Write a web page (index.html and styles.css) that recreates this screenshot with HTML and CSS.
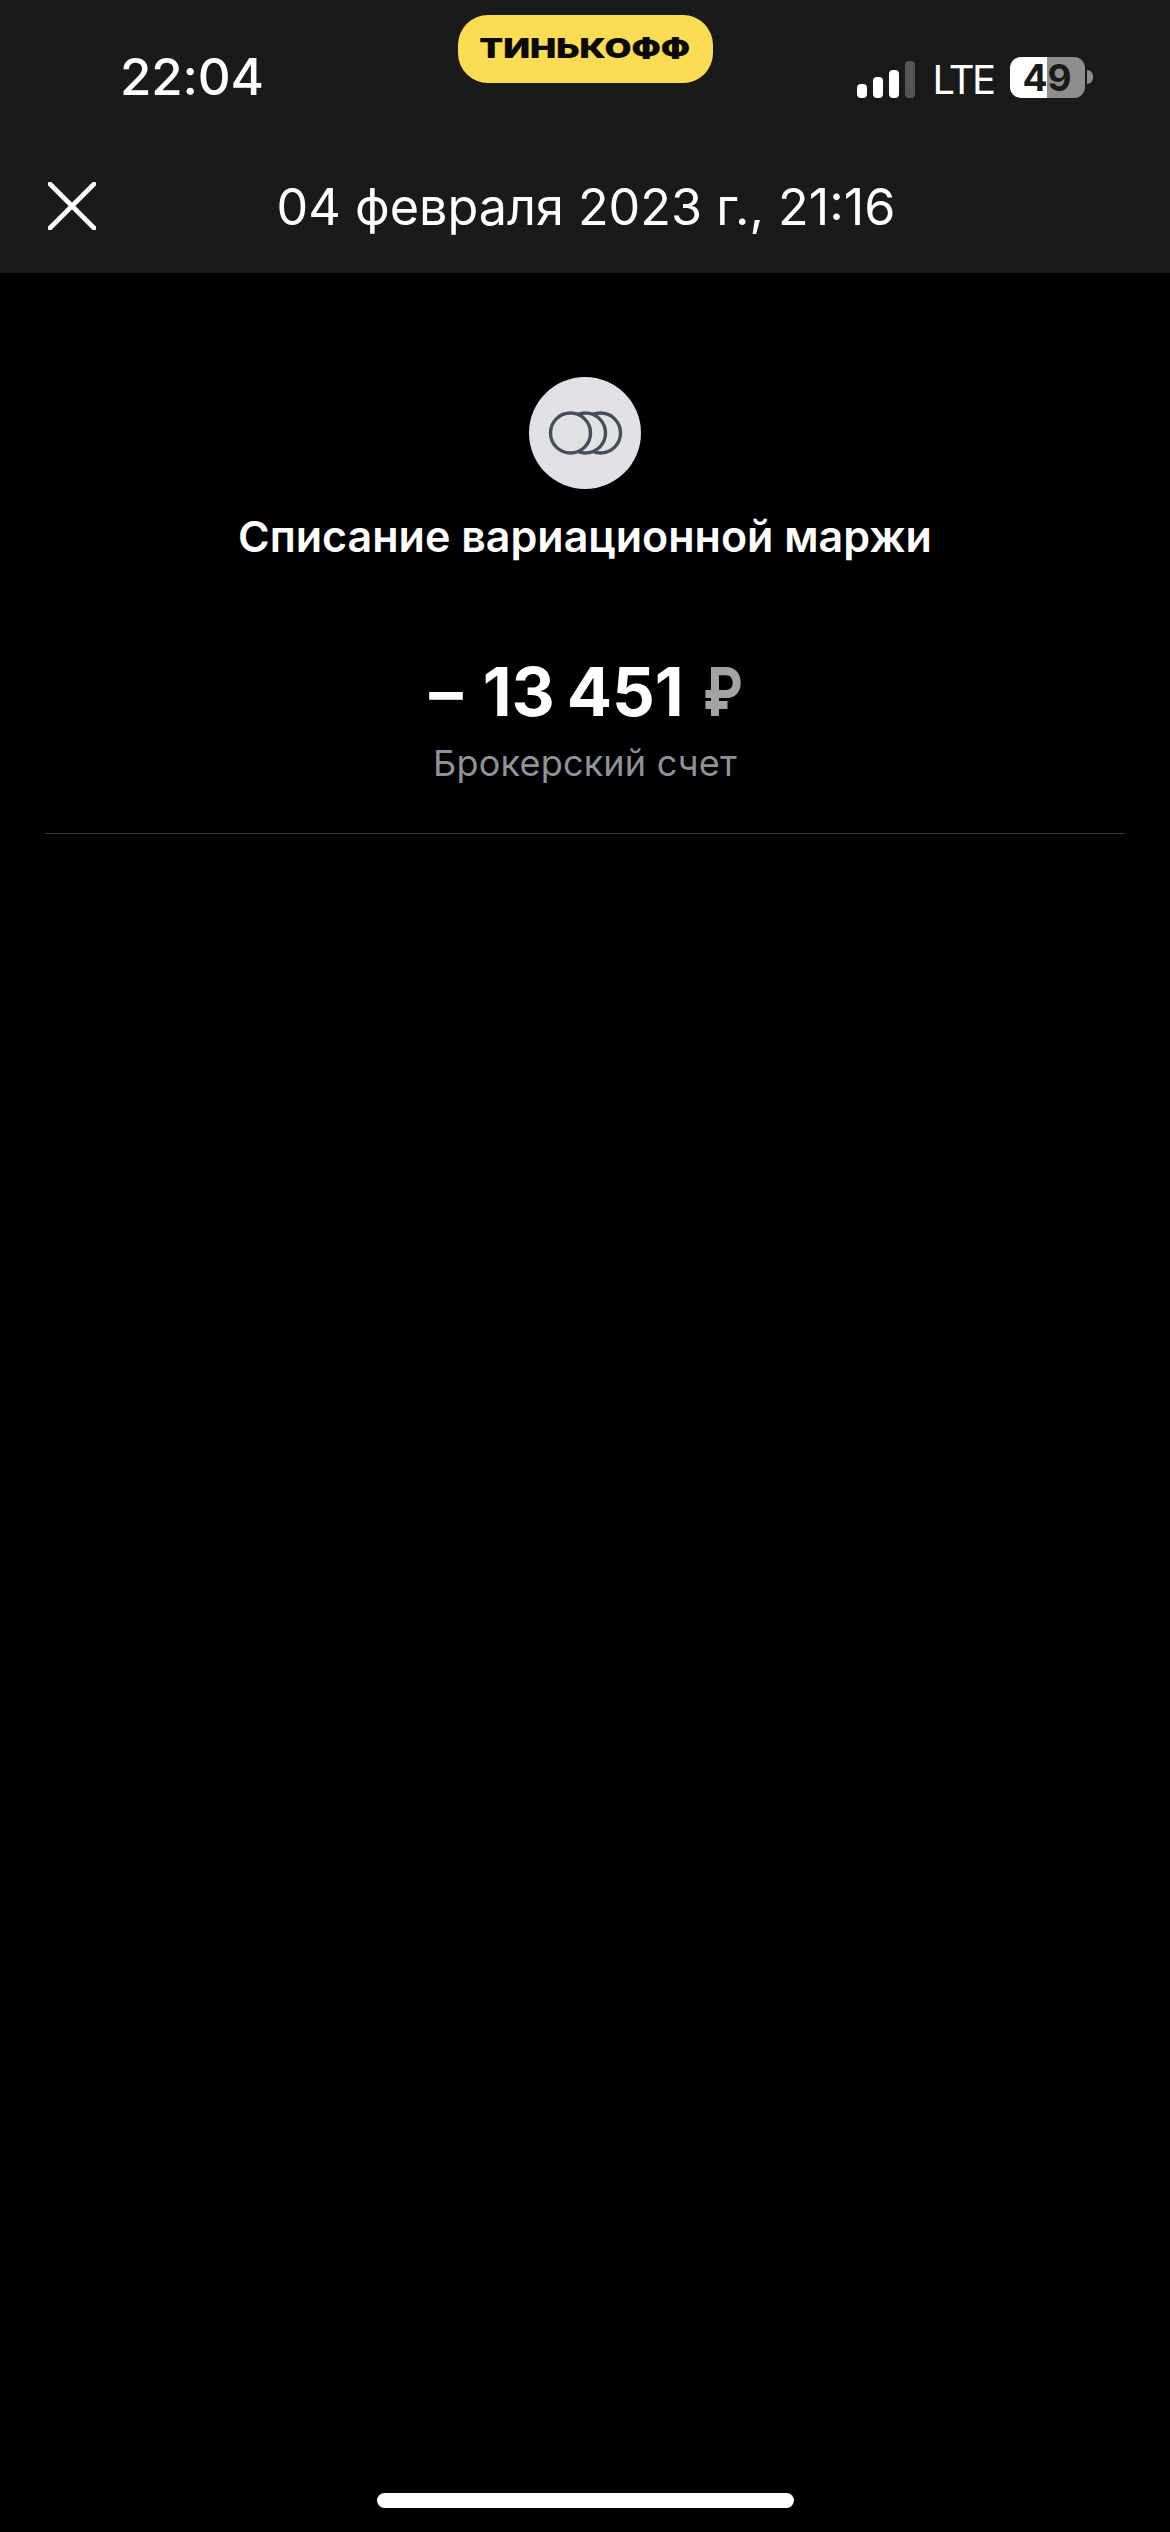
FILE: index.html
```html
<!DOCTYPE html>
<html lang="ru">
<head>
<meta charset="utf-8">
<title>Операция</title>
<link rel="stylesheet" href="styles.css">
</head>
<body>
<div class="page">
  <header class="header">
    <div class="status">
      <div class="time">22:04</div>
      <div class="pill"><span class="pill-text">ТИНЬКОФФ</span></div>
      <div class="indicators">
        <div class="signal">
          <i class="bar b1"></i><i class="bar b2"></i><i class="bar b3"></i><i class="bar b4"></i>
        </div>
        <span class="lte">LTE</span>
        <div class="battery"><span class="level">49</span></div>
        <i class="tip"></i>
      </div>
    </div>
    <div class="nav">
      <svg class="close" width="48" height="48" viewBox="0 0 48 48" fill="none"><path d="M2 2 46 46M46 2 2 46" stroke="#fff" stroke-width="4.6" stroke-linecap="round"/></svg>
      <div class="nav-title">04 февраля 2023 г., 21:16</div>
    </div>
  </header>
  <main class="main">
    <div class="avatar">
      <svg width="78" height="48" viewBox="0 0 78 48" fill="none">
        <g fill="#dfe1e4" stroke="#484c58" stroke-width="3.4">
          <circle cx="54.5" cy="24" r="20"/>
          <circle cx="39.5" cy="24" r="20"/>
          <circle cx="24.5" cy="24" r="20"/>
        </g>
      </svg>
    </div>
    <h1 class="op-title">Списание вариационной маржи</h1>
    <div class="amount"><span class="dash">–</span><span>13 451</span><span class="currency">₽</span></div>
    <div class="account">Брокерский счет</div>
    <div class="divider"></div>
  </main>
  <div class="home"></div>
</div>
</body>
</html>
```
FILE: styles.css
```css
* { box-sizing: border-box; }
html, body { margin: 0; padding: 0; background: #000; }
body { font-family: Inter, "Noto Sans", sans-serif; color: #fff; }
.page { height: 2532px; display: flex; flex-direction: column; overflow: hidden; }
.header { height: 273px; background: #1a1a1a; flex: none; }
.status { height: 108px; display: grid; grid-template-columns: 1fr 255px 1fr; padding-top: 15px; }
.time { padding: 32px 0 0 120px; font-size: 51px; line-height: 60px; font-weight: 500; letter-spacing: -0.2px; }
.pill { height: 68px; border-radius: 30px; background: #fcdb55; display: flex; align-items: center; justify-content: center; }
.pill-text { display: inline-block; color: #0a0a0a; font-size: 27px; font-weight: 900; line-height: 30px; white-space: nowrap; transform: scaleX(1.29); }
.indicators { display: flex; align-items: flex-start; padding: 42px 0 0 144px; position: relative; }
.signal { display: flex; align-items: flex-end; gap: 6px; height: 39px; margin-top: 2px; }
.bar { display: block; width: 10px; background: #fff; border-radius: 4px; }
.b1 { height: 14px; }
.b2 { height: 21px; }
.b3 { height: 28px; }
.b4 { height: 37px; background: #555; }
.lte { margin: 3px 0 0 18px; font-size: 40px; line-height: 40px; font-weight: 400; width: 60px; white-space: nowrap; letter-spacing: -2.6px; }
.battery { margin-left: 17px; width: 75px; height: 41px; border-radius: 11px; background: linear-gradient(to right, #fff 0, #fff 37px, #8e8e8e 37px); display: flex; align-items: center; justify-content: center; }
.level { color: #1a1a1a; font-size: 37px; line-height: 41px; font-weight: 700; }
.tip { width: 6px; height: 14px; margin: 13px 0 0 2px; background: #8e8e8e; border-radius: 0 7px 7px 0; display: block; }
.nav { height: 165px; display: flex; align-items: flex-start; position: relative; padding: 74px 0 0 48px; }
.close { display: block; flex: none; }
.nav-title { position: absolute; left: 0; right: 0; top: 69px; text-align: center; font-size: 50.3px; line-height: 60px; font-weight: 400; padding-left: 2px; }
.main { display: flex; flex-direction: column; align-items: center; padding-top: 104px; }
.avatar { width: 112px; height: 112px; border-radius: 50%; background: #dfe1e4; display: flex; align-items: center; justify-content: center; }
.op-title { margin: 22px 0 0; font-size: 43px; line-height: 50px; font-weight: 600; white-space: nowrap; }
.amount { margin-top: 92px; display: flex; align-items: baseline; font-size: 67px; line-height: 78px; font-weight: 700; white-space: nowrap; word-spacing: -4px; }
.dash { margin-right: 20px; }
.currency { color: #a3a3a3; margin-left: 19px; display: inline-block; width: 38px; transform: scaleX(0.8); transform-origin: left center; }
.account { margin-top: 10px; font-size: 36px; line-height: 44px; color: #8e9299; letter-spacing: 0.2px; }
.divider { margin-top: 48px; width: 1080px; height: 1px; background: #3a3a3a; flex: none; }
.home { margin: auto auto 24px; width: 417px; height: 15px; border-radius: 8px; background: #fff; flex: none; }
```
